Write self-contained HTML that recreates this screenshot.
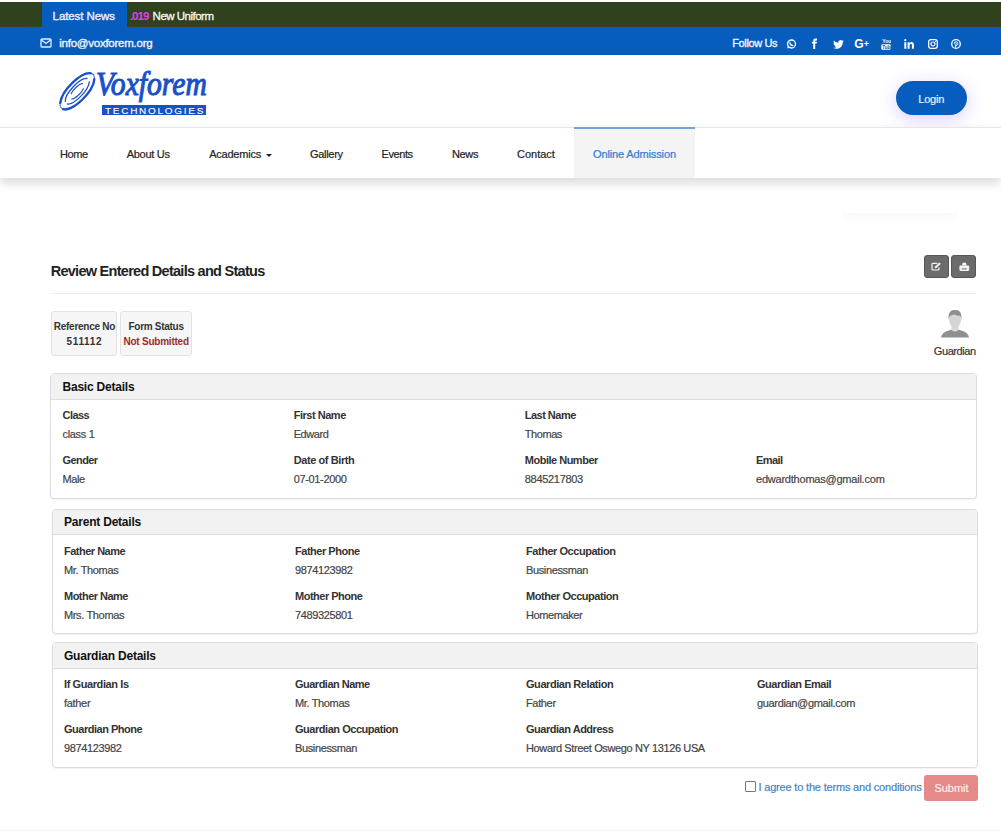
<!DOCTYPE html>
<html><head><meta charset="utf-8"><title>Review Entered Details</title>
<style>
html,body{margin:0;padding:0;background:#fff;width:1001px;height:831px;overflow:hidden;position:relative}
body{font-family:"Liberation Sans",sans-serif}
.t{position:absolute;white-space:nowrap;line-height:1}
.box{position:absolute}
</style></head><body>
<div class="box" style="left:0;top:2px;width:1001px;height:25px;background:#30411e"></div>
<div class="box" style="left:0;top:27px;width:1001px;height:28px;background:#065dbe"></div>
<div class="box" style="left:42px;top:2px;width:85px;height:25px;background:#065dbe"></div>
<div class="t" style="left:52.60px;top:11.37px;font-size:11.5px;-webkit-text-stroke:0.35px #eef;color:#eef;letter-spacing:-0.088px;">Latest News</div>
<div class="t" style="left:129.90px;top:11.37px;font-size:11.5px;font-weight:bold;color:#e03ff0;letter-spacing:-0.961px;">.019</div>
<div class="t" style="left:152.60px;top:11.37px;font-size:11.5px;-webkit-text-stroke:0.35px #f4f4e8;color:#f4f4e8;letter-spacing:-0.506px;">New Uniform</div>
<svg class="box" style="left:40px;top:38px" width="12" height="10" viewBox="0 0 12 10"><rect x="1" y="1" width="10" height="8" rx="1" fill="none" stroke="#e8eefa" stroke-width="1.3"/><path d="M1.5 2 L6 5.5 L10.5 2" fill="none" stroke="#e8eefa" stroke-width="1.3"/></svg>
<div class="t" style="left:59.30px;top:37.87px;font-size:11.5px;-webkit-text-stroke:0.35px #f0f4ff;color:#f0f4ff;letter-spacing:-0.251px;">info@voxforem.org</div>
<div class="t" style="left:732.20px;top:38.09px;font-size:11px;-webkit-text-stroke:0.35px #eef2ff;color:#eef2ff;letter-spacing:-0.361px;">Follow Us</div>
<svg class="box" style="left:786px;top:39px" width="11" height="10" viewBox="0 0 11 10"><circle cx="5.5" cy="5" r="4" fill="none" stroke="#fff" stroke-width="1.3"/><path d="M1.2 9.6 L2 6.8 L3.8 8.4Z" fill="#fff"/><path d="M3.8 3.4 Q4 6.4 7.2 6.6" fill="none" stroke="#fff" stroke-width="1.2"/></svg>
<svg class="box" style="left:811px;top:38px" width="8" height="11" viewBox="0 0 8 11"><path d="M2.2 11 V5.6 H0.8 V3.8 H2.2 V2.6 Q2.2 0.6 4.3 0.6 H6 V2.4 H4.9 Q4.2 2.4 4.2 3.1 V3.8 H6 L5.7 5.6 H4.2 V11Z" fill="#fff"/></svg>
<svg class="box" style="left:833px;top:39.5px" width="11" height="9" viewBox="0 0 24 20"><path d="M24 2.4c-.9.4-1.8.6-2.8.8 1-.6 1.8-1.6 2.2-2.7-1 .6-2 1-3.1 1.2C19.4.7 18.1 0 16.6 0c-2.7 0-4.9 2.2-4.9 4.9 0 .4 0 .8.1 1.1C7.7 5.8 4.1 3.9 1.7.9c-.4.7-.7 1.6-.7 2.5 0 1.7.9 3.2 2.2 4.1-.8 0-1.6-.2-2.2-.6v.1c0 2.4 1.7 4.4 3.9 4.8-.4.1-.8.2-1.3.2-.3 0-.6 0-.9-.1.6 2 2.4 3.4 4.6 3.4-1.7 1.3-3.8 2.1-6.1 2.1-.4 0-.8 0-1.2-.1 2.2 1.400 4.800 2.200 7.500 2.2 9.100 0 14-7.500 14-14v-.6c1-.7 1.800-1.600 2.500-2.500z" fill="#fff"/></svg>
<div class="t" style="left:854.3px;top:38px;font-size:12px;font-weight:bold;color:#fff;line-height:12px">G<span style="font-size:9px;position:relative;top:-1px">+</span></div>
<svg class="box" style="left:880.5px;top:38.5px" width="10" height="11" viewBox="0 0 10 11"><text x="1.2" y="4.4" font-family="Liberation Sans" font-weight="bold" font-size="5" fill="#fff">You</text><rect x="0.3" y="5.2" width="9.4" height="5.6" rx="1.2" fill="#fff"/><text x="1.3" y="9.8" font-family="Liberation Sans" font-weight="bold" font-size="4.6" fill="#065dbe">Tube</text></svg>
<svg class="box" style="left:904px;top:39px" width="10" height="10" viewBox="0 0 10 10"><rect x="0.3" y="3.2" width="2" height="6.6" fill="#fff"/><circle cx="1.3" cy="1.2" r="1.1" fill="#fff"/><path d="M3.6 3.2 H5.5 V4.2 Q6.2 3 7.6 3 Q9.9 3 9.9 5.8 V9.8 H7.9 V6.2 Q7.9 4.8 6.9 4.8 Q5.6 4.8 5.6 6.3 V9.8 H3.6Z" fill="#fff"/></svg>
<svg class="box" style="left:927.5px;top:39px" width="10" height="10" viewBox="0 0 10 10"><rect x="0.7" y="0.7" width="8.6" height="8.6" rx="2.4" fill="none" stroke="#fff" stroke-width="1.3"/><circle cx="5" cy="5" r="2" fill="none" stroke="#fff" stroke-width="1.2"/><circle cx="7.5" cy="2.5" r=".6" fill="#fff"/></svg>
<svg class="box" style="left:951px;top:39px" width="10" height="10" viewBox="0 0 10 10"><circle cx="5" cy="5" r="4.3" fill="none" stroke="#fff" stroke-width="1.3"/><path d="M4.4 8.6 L5.2 4.3 M4.6 6.3 Q5.4 6.7 6.1 6.3 Q7.1 5.6 6.9 4.2 Q6.6 2.8 5 2.8 Q3.3 2.9 3.2 4.3 Q3.2 5 3.6 5.3" fill="none" stroke="#fff" stroke-width="1"/></svg>
<div class="box" style="left:0;top:55px;width:1001px;height:72px;background:#fff"></div>
<svg class="box" style="left:55px;top:68px" width="45" height="45" viewBox="0 0 45 45">
<g transform="translate(22.3,23.3) rotate(-47)" fill="none" stroke="#1a50c8" stroke-linecap="round">
<ellipse cx="0" cy="0" rx="23.2" ry="9.6" stroke-width="0.9"/>
<path d="M-20 -4.6 A23.2 9.6 0 0 1 22.5 -2.3" stroke-width="2.3"/>
<path d="M20.5 4.2 A23.2 9.6 0 0 1 -22.8 1.8" stroke-width="2.3"/>
<path d="M16 -1.6 A16.5 6 0 0 0 -15.5 -2" stroke-width="1.3"/>
<path d="M-16 1.5 A16.5 6 0 0 0 15 2.4" stroke-width="1.3"/>
<path d="M9.3 -1.6 A10 3.6 0 0 0 -6 -2.9" stroke-width="1.1"/>
<path d="M-9.5 1.2 A10 3.6 0 0 0 6 2.8" stroke-width="1.1"/>
</g></svg>
<div class="t" style="left:96px;top:64px;font-family:'Liberation Serif',serif;font-style:italic;font-size:33.5px;line-height:40px;color:#1a50c8;-webkit-text-stroke:1.1px #1a50c8;transform:scaleX(0.885);transform-origin:left top">Voxforem</div>
<div class="box" style="left:102px;top:104.8px;width:104px;height:10.3px;background:#1a50c8"></div>
<div class="t" style="left:105.3px;top:105.6px;font-size:9.5px;line-height:9.5px;color:#fff;letter-spacing:1.65px;transform:scaleX(1.05);transform-origin:left top;-webkit-text-stroke:0.1px #fff">TECHNOLOGIES</div>
<div class="box" style="left:896px;top:81px;width:71px;height:33.5px;border-radius:17px;background:#065dbe;box-shadow:0 4px 18px rgba(110,60,255,0.25)"></div>
<div class="t" style="left:918.30px;top:93.69px;font-size:11px;-webkit-text-stroke:0.2px #eef3ff;color:#eef3ff;letter-spacing:-0.229px;">Login</div>
<div class="box" style="left:0;top:127px;width:1001px;height:51px;background:#fff;border-top:1px solid #e6e6e6;box-sizing:border-box;box-shadow:0 5px 10px rgba(0,0,0,0.15)"></div>
<div class="box" style="left:574px;top:127px;width:121px;height:51px;background:#f4f4f4;border-top:2px solid #70a4d9;box-sizing:border-box"></div>
<div class="t" style="left:60.00px;top:148.69px;font-size:11px;-webkit-text-stroke:0.2px #222;color:#222;letter-spacing:-0.448px;">Home</div>
<div class="t" style="left:126.70px;top:148.69px;font-size:11px;-webkit-text-stroke:0.2px #222;color:#222;letter-spacing:-0.278px;">About Us</div>
<div class="t" style="left:209.20px;top:148.69px;font-size:11px;-webkit-text-stroke:0.2px #222;color:#222;letter-spacing:-0.225px;">Academics</div>
<div class="t" style="left:310.00px;top:148.69px;font-size:11px;-webkit-text-stroke:0.2px #222;color:#222;letter-spacing:-0.307px;">Gallery</div>
<div class="t" style="left:381.60px;top:148.69px;font-size:11px;-webkit-text-stroke:0.2px #222;color:#222;letter-spacing:-0.446px;">Events</div>
<div class="t" style="left:452.00px;top:148.69px;font-size:11px;-webkit-text-stroke:0.2px #222;color:#222;letter-spacing:-0.369px;">News</div>
<div class="t" style="left:517.00px;top:148.69px;font-size:11px;-webkit-text-stroke:0.2px #222;color:#222;letter-spacing:-0.018px;">Contact</div>
<div class="box" style="left:266px;top:153.5px;width:0;height:0;border-left:3px solid transparent;border-right:3px solid transparent;border-top:3.5px solid #222"></div>
<div class="t" style="left:593.00px;top:148.69px;font-size:11px;-webkit-text-stroke:0.2px #2f7bd0;color:#2f7bd0;letter-spacing:-0.132px;">Online Admission</div>
<div class="box" style="left:845px;top:205px;width:110px;height:8px;background:#fff;box-shadow:0 4px 10px rgba(0,0,0,0.045)"></div>
<div class="t" style="left:50.70px;top:264.13px;font-size:14.5px;font-weight:bold;color:#222;letter-spacing:-0.725px;">Review Entered Details and Status</div>
<div class="box" style="left:923.6px;top:255.1px;width:25px;height:22.5px;background:#6b6b6b;border:1px solid #575757;border-radius:3px;box-sizing:border-box"></div>
<div class="box" style="left:951.4px;top:255.1px;width:24.5px;height:22.5px;background:#6b6b6b;border:1px solid #575757;border-radius:3px;box-sizing:border-box"></div>
<svg class="box" style="left:930.5px;top:262px" width="11" height="9" viewBox="0 0 11 9"><path d="M6.5 1.3 H2 Q1 1.3 1 2.3 V7 Q1 8 2 8 H7 Q8 8 8 7 V5.5" fill="none" stroke="#f4f4f4" stroke-width="1.2"/><path d="M3.6 6.2 L4.1 4.6 L8.4 0.4 L9.8 1.7 L5.5 5.9Z" fill="#f4f4f4"/></svg>
<svg class="box" style="left:958.5px;top:262px" width="11" height="10" viewBox="0 0 11 10"><path d="M3 3.6 L3.6 0.8 H6.9 L7.5 3.6Z" fill="#f4f4f4"/><path d="M1.5 3.4 H9 Q10.2 3.4 10.2 4.8 V7.6 Q10.2 9 8.8 9 H1.8 Q0.4 9 0.4 7.6 V4.8 Q0.4 3.4 1.5 3.4Z" fill="#f4f4f4"/><rect x="2.8" y="6.4" width="4.9" height="1" fill="#6b6b6b"/></svg>
<div class="box" style="left:51px;top:292.5px;width:925px;height:1px;background:#eee"></div>
<div class="box" style="left:51px;top:311.3px;width:66px;height:44.6px;background:#f6f6f6;border:1px solid #e3e3e3;border-radius:3px;box-sizing:border-box"></div>
<div class="box" style="left:120.3px;top:311.3px;width:71.4px;height:44.6px;background:#f6f6f6;border:1px solid #e3e3e3;border-radius:3px;box-sizing:border-box"></div>
<div class="t" style="left:53.80px;top:321.74px;font-size:10px;font-weight:bold;color:#333;letter-spacing:-0.270px;">Reference No</div>
<div class="t" style="left:66.50px;top:336.64px;font-size:10px;font-weight:bold;color:#333;letter-spacing:0.657px;">511112</div>
<div class="t" style="left:128.50px;top:321.74px;font-size:10px;font-weight:bold;color:#333;letter-spacing:-0.284px;">Form Status</div>
<div class="t" style="left:123.50px;top:336.64px;font-size:10px;font-weight:bold;color:#a42a2a;letter-spacing:-0.235px;">Not Submitted</div>
<svg class="box" style="left:940px;top:309px" width="30" height="29" viewBox="0 0 30 29">
<path d="M1 28.5 Q2 23 9 21.5 L11.5 20.5 Q15 23.5 18.5 20.5 L21 21.5 Q28 23 29 28.5Z" fill="#8f8f8f"/>
<path d="M11.5 17 V21 Q15 24 18.5 21 V17Z" fill="#d8d8d8"/>
<ellipse cx="15" cy="10.5" rx="6" ry="8.3" fill="#d5d5d5"/>
<path d="M8.7 11 Q8 4 11 2 Q13 0.5 15.5 1.3 Q17 0.5 19 2 Q22 4 21.3 11 Q21 8 20 6.5 Q17 7 14 5.6 Q11 6.5 10 7 Q9 8.5 8.7 11Z" fill="#8f8f8f"/>
</svg>
<div class="t" style="left:933.80px;top:345.69px;font-size:11px;-webkit-text-stroke:0.2px #333;color:#333;letter-spacing:-0.407px;">Guardian</div>
<div class="box" style="left:50px;top:373.4px;width:927px;height:125.6px;border:1px solid #dcdcdc;border-radius:4px;box-sizing:border-box;background:#fff;box-shadow:0 1px 1px rgba(0,0,0,0.05)"></div>
<div class="box" style="left:51px;top:374.4px;width:925px;height:25.5px;background:#f2f2f2;border-bottom:1px solid #dcdcdc;box-sizing:border-box;border-radius:2px 2px 0 0"></div>
<div class="t" style="left:62.50px;top:380.64px;font-size:12px;font-weight:bold;color:#111;letter-spacing:-0.218px;">Basic Details</div>
<div class="t" style="left:62.50px;top:409.69px;font-size:11px;font-weight:bold;color:#333;letter-spacing:-0.550px;">Class</div>
<div class="t" style="left:62.50px;top:428.69px;font-size:11px;-webkit-text-stroke:0.2px #444;color:#444;letter-spacing:-0.314px;">class 1</div>
<div class="t" style="left:293.70px;top:409.69px;font-size:11px;font-weight:bold;color:#333;letter-spacing:-0.474px;">First Name</div>
<div class="t" style="left:293.70px;top:428.69px;font-size:11px;-webkit-text-stroke:0.2px #444;color:#444;letter-spacing:-0.410px;">Edward</div>
<div class="t" style="left:524.80px;top:409.69px;font-size:11px;font-weight:bold;color:#333;letter-spacing:-0.522px;">Last Name</div>
<div class="t" style="left:524.80px;top:428.69px;font-size:11px;-webkit-text-stroke:0.2px #444;color:#444;letter-spacing:-0.437px;">Thomas</div>
<div class="t" style="left:62.50px;top:454.69px;font-size:11px;font-weight:bold;color:#333;letter-spacing:-0.578px;">Gender</div>
<div class="t" style="left:62.50px;top:473.69px;font-size:11px;-webkit-text-stroke:0.2px #444;color:#444;letter-spacing:-0.437px;">Male</div>
<div class="t" style="left:293.70px;top:454.69px;font-size:11px;font-weight:bold;color:#333;letter-spacing:-0.413px;">Date of Birth</div>
<div class="t" style="left:293.70px;top:473.69px;font-size:11px;-webkit-text-stroke:0.2px #444;color:#444;letter-spacing:-0.344px;">07-01-2000</div>
<div class="t" style="left:524.80px;top:454.69px;font-size:11px;font-weight:bold;color:#333;letter-spacing:-0.497px;">Mobile Number</div>
<div class="t" style="left:524.80px;top:473.69px;font-size:11px;-webkit-text-stroke:0.2px #444;color:#444;letter-spacing:-0.309px;">8845217803</div>
<div class="t" style="left:756.00px;top:454.69px;font-size:11px;font-weight:bold;color:#333;letter-spacing:-0.550px;">Email</div>
<div class="t" style="left:756.00px;top:473.69px;font-size:11px;-webkit-text-stroke:0.2px #444;color:#444;letter-spacing:-0.221px;">edwardthomas@gmail.com</div>
<div class="box" style="left:52px;top:509.4px;width:926px;height:125px;border:1px solid #dcdcdc;border-radius:4px;box-sizing:border-box;background:#fff;box-shadow:0 1px 1px rgba(0,0,0,0.05)"></div>
<div class="box" style="left:53px;top:510.4px;width:924px;height:24.3px;background:#f2f2f2;border-bottom:1px solid #dcdcdc;box-sizing:border-box;border-radius:2px 2px 0 0"></div>
<div class="t" style="left:64.00px;top:516.14px;font-size:12px;font-weight:bold;color:#111;letter-spacing:-0.215px;">Parent Details</div>
<div class="t" style="left:64.00px;top:545.99px;font-size:11px;font-weight:bold;color:#333;letter-spacing:-0.500px;">Father Name</div>
<div class="t" style="left:64.00px;top:564.99px;font-size:11px;-webkit-text-stroke:0.2px #444;color:#444;letter-spacing:-0.354px;">Mr. Thomas</div>
<div class="t" style="left:295.00px;top:545.99px;font-size:11px;font-weight:bold;color:#333;letter-spacing:-0.479px;">Father Phone</div>
<div class="t" style="left:295.00px;top:564.99px;font-size:11px;-webkit-text-stroke:0.2px #444;color:#444;letter-spacing:-0.374px;">9874123982</div>
<div class="t" style="left:526.00px;top:545.99px;font-size:11px;font-weight:bold;color:#333;letter-spacing:-0.456px;">Father Occupation</div>
<div class="t" style="left:526.00px;top:564.99px;font-size:11px;-webkit-text-stroke:0.2px #444;color:#444;letter-spacing:-0.363px;">Businessman</div>
<div class="t" style="left:64.00px;top:590.99px;font-size:11px;font-weight:bold;color:#333;letter-spacing:-0.523px;">Mother Name</div>
<div class="t" style="left:64.00px;top:609.99px;font-size:11px;-webkit-text-stroke:0.2px #444;color:#444;letter-spacing:-0.352px;">Mrs. Thomas</div>
<div class="t" style="left:295.00px;top:590.99px;font-size:11px;font-weight:bold;color:#333;letter-spacing:-0.500px;">Mother Phone</div>
<div class="t" style="left:295.00px;top:609.99px;font-size:11px;-webkit-text-stroke:0.2px #444;color:#444;letter-spacing:-0.374px;">7489325801</div>
<div class="t" style="left:526.00px;top:590.99px;font-size:11px;font-weight:bold;color:#333;letter-spacing:-0.470px;">Mother Occupation</div>
<div class="t" style="left:526.00px;top:609.99px;font-size:11px;-webkit-text-stroke:0.2px #444;color:#444;letter-spacing:-0.412px;">Homemaker</div>
<div class="box" style="left:52px;top:641.7px;width:926px;height:126.6px;border:1px solid #dcdcdc;border-radius:4px;box-sizing:border-box;background:#fff;box-shadow:0 1px 1px rgba(0,0,0,0.05)"></div>
<div class="box" style="left:53px;top:642.7px;width:924px;height:26px;background:#f2f2f2;border-bottom:1px solid #dcdcdc;box-sizing:border-box;border-radius:2px 2px 0 0"></div>
<div class="t" style="left:64.00px;top:650.14px;font-size:12px;font-weight:bold;color:#111;letter-spacing:-0.223px;">Guardian Details</div>
<div class="t" style="left:64.00px;top:678.99px;font-size:11px;font-weight:bold;color:#333;letter-spacing:-0.406px;">If Guardian Is</div>
<div class="t" style="left:64.00px;top:697.99px;font-size:11px;-webkit-text-stroke:0.2px #444;color:#444;letter-spacing:-0.309px;">father</div>
<div class="t" style="left:295.00px;top:678.99px;font-size:11px;font-weight:bold;color:#333;letter-spacing:-0.508px;">Guardian Name</div>
<div class="t" style="left:295.00px;top:697.99px;font-size:11px;-webkit-text-stroke:0.2px #444;color:#444;letter-spacing:-0.354px;">Mr. Thomas</div>
<div class="t" style="left:526.00px;top:678.99px;font-size:11px;font-weight:bold;color:#333;letter-spacing:-0.444px;">Guardian Relation</div>
<div class="t" style="left:526.00px;top:697.99px;font-size:11px;-webkit-text-stroke:0.2px #444;color:#444;letter-spacing:-0.350px;">Father</div>
<div class="t" style="left:757.00px;top:678.99px;font-size:11px;font-weight:bold;color:#333;letter-spacing:-0.466px;">Guardian Email</div>
<div class="t" style="left:757.00px;top:697.99px;font-size:11px;-webkit-text-stroke:0.2px #444;color:#444;letter-spacing:-0.337px;">guardian@gmail.com</div>
<div class="t" style="left:64.00px;top:723.99px;font-size:11px;font-weight:bold;color:#333;letter-spacing:-0.490px;">Guardian Phone</div>
<div class="t" style="left:64.00px;top:742.99px;font-size:11px;-webkit-text-stroke:0.2px #444;color:#444;letter-spacing:-0.374px;">9874123982</div>
<div class="t" style="left:295.00px;top:723.99px;font-size:11px;font-weight:bold;color:#333;letter-spacing:-0.466px;">Guardian Occupation</div>
<div class="t" style="left:295.00px;top:742.99px;font-size:11px;-webkit-text-stroke:0.2px #444;color:#444;letter-spacing:-0.363px;">Businessman</div>
<div class="t" style="left:526.00px;top:723.99px;font-size:11px;font-weight:bold;color:#333;letter-spacing:-0.475px;">Guardian Address</div>
<div class="t" style="left:526.00px;top:742.99px;font-size:11px;-webkit-text-stroke:0.2px #444;color:#444;letter-spacing:-0.374px;">Howard Street Oswego NY 13126 USA</div>
<div class="box" style="left:745.3px;top:781px;width:10.5px;height:10.5px;border:1px solid #777;border-radius:1px;box-sizing:border-box;background:#fff"></div>
<div class="t" style="left:758.50px;top:781.69px;font-size:11px;-webkit-text-stroke:0.2px #4583c4;color:#4583c4;letter-spacing:-0.182px;">I agree to the terms and conditions</div>
<div class="box" style="left:924.2px;top:775.2px;width:53.7px;height:25.8px;background:#e48a89;border-radius:3px"></div>
<div class="t" style="left:934.50px;top:782.69px;font-size:11px;-webkit-text-stroke:0.2px #fbeeee;color:#fbeeee;letter-spacing:-0.047px;">Submit</div>
<div class="box" style="left:0;top:830px;width:1001px;height:1px;background:#f2f2f2"></div>
</body></html>
